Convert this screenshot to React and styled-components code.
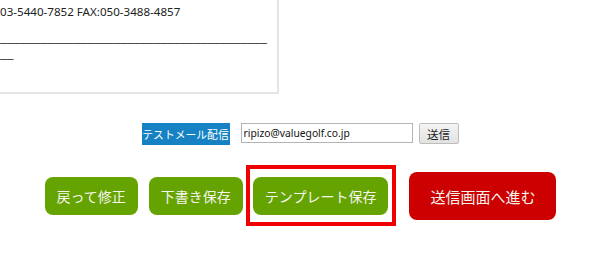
import React from "react";
import styled, { createGlobalStyle } from "styled-components";

const Global = createGlobalStyle`
  html, body { margin: 0; padding: 0; background: #fff; }
  body { font-family: "Noto Sans", "Noto Sans CJK JP", sans-serif; color: #333; }
`;

const Page = styled.div`
  width: 600px;
  height: 257px;
  overflow: hidden;
  background: #fff;
`;

const Preview = styled.div`
  width: 277px;
  border-right: 2px solid #e4e4e4;
  border-bottom: 2px solid #e4e4e4;
  padding: 4px 0 31px 0;
`;

const Line = styled.p`
  margin: 0;
  font-size: 11.6px;
  line-height: 16px;
  color: #222;
  white-space: nowrap;
`;

const Rule = styled.p`
  margin: 9px 0 0 0;
  width: 270px;
  font-family: "Liberation Sans", sans-serif;
  font-size: 12px;
  line-height: 16px;
  color: #3a3a3a;
  word-break: break-all;
`;

const TestRow = styled.div`
  display: flex;
  justify-content: center;
  align-items: center;
  margin-top: 29px;
  height: 22px;
`;

const TestLabel = styled.span`
  display: inline-flex;
  align-items: center;
  justify-content: center;
  width: 88px;
  height: 22px;
  background: #1682c4;
  color: #fff;
  font-family: "Noto Sans CJK JP", sans-serif;
  font-size: 10.8px;
  margin-right: 11px;
`;

const MailInput = styled.input`
  box-sizing: border-box;
  width: 172px;
  height: 20px;
  border: 1px solid #b4b4b4;
  padding: 0 2px;
  font-family: "Noto Sans", sans-serif;
  font-size: 10.3px;
  color: #111;
  margin-right: 6px;
  align-self: flex-start;
  outline: none;
`;

const SendButton = styled.button`
  box-sizing: border-box;
  width: 40px;
  height: 21px;
  border: 1px solid #bdbdbd;
  border-radius: 2px;
  background: linear-gradient(#f4f4f4, #e2e2e2);
  font-family: "Noto Sans CJK JP", sans-serif;
  font-size: 11.5px;
  color: #222;
  padding: 0;
  align-self: flex-start;
`;

const ActionRow = styled.div`
  display: flex;
  justify-content: center;
  align-items: center;
  margin-top: 27px;
  padding-left: 1px;
`;

const ActionButton = styled.button`
  box-sizing: border-box;
  border: none;
  border-radius: 8px;
  font-family: "Noto Sans CJK JP", sans-serif;
  color: #f4f4ee;
  background: ${(p) => (p.$primary ? "#cc0000" : "#64a300")};
  height: ${(p) => (p.$primary ? "48px" : "38px")};
  padding: ${(p) => (p.$primary ? "0 21px" : "0 12px")};
  font-size: ${(p) => (p.$primary ? "15px" : "14px")};
  margin-left: ${(p) => p.$gap || 0}px;
  white-space: nowrap;
  cursor: pointer;
`;

const Highlight = styled.span`
  position: relative;
  display: inline-flex;
  margin-left: 10px;
`;

const HighlightFrame = styled.span`
  position: absolute;
  left: -7px;
  right: -8px;
  top: -12px;
  bottom: -11px;
  border: 4px solid #f00000;
  pointer-events: none;
`;

export default function App() {
  return (
    <Page>
      <Global />
      <Preview>
        <Line>03-5440-7852 FAX:050-3488-4857</Line>
        <Rule>{"_".repeat(42)}</Rule>
      </Preview>
      <TestRow>
        <TestLabel>テストメール配信</TestLabel>
        <MailInput defaultValue="ripizo@valuegolf.co.jp" />
        <SendButton>送信</SendButton>
      </TestRow>
      <ActionRow>
        <ActionButton>戻って修正</ActionButton>
        <ActionButton $gap={11}>下書き保存</ActionButton>
        <Highlight>
          <ActionButton>テンプレート保存</ActionButton>
          <HighlightFrame />
        </Highlight>
        <ActionButton $primary $gap={21}>送信画面へ進む</ActionButton>
      </ActionRow>
    </Page>
  );
}
